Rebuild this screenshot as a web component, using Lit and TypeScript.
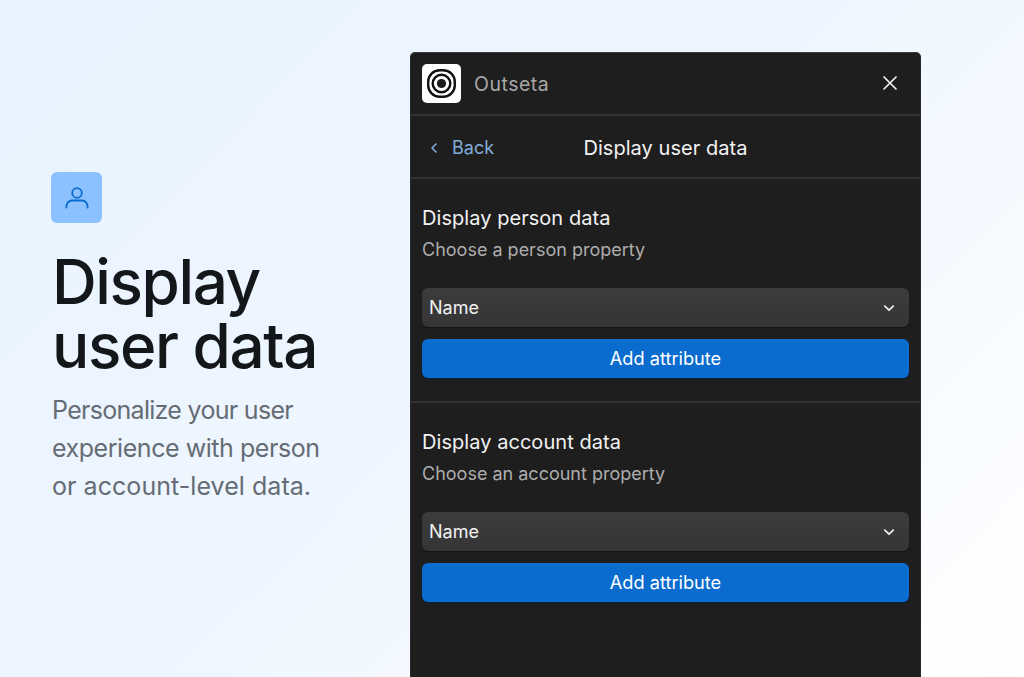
import { LitElement, html, css } from 'lit'
import { customElement } from 'lit/decorators.js'

const chevronDown = html`<svg class="chev" width="12" height="12" viewBox="0 0 12 12" fill="none"><path d="M1.800 4.200L6 8.200l4.200-4" stroke="#ececec" stroke-width="1.800" stroke-linecap="round" stroke-linejoin="round"/></svg>`

@customElement('app-root')
export class AppRoot extends LitElement {
  static styles = css`
    :host {
      display: block;
      width: 1024px;
      height: 677px;
      overflow: hidden;
      font-family: Inter, 'Liberation Sans', sans-serif;
      background: linear-gradient(135deg, #e8f3ff 0%, #eff6ff 50%, #ffffff 100%);
    }
    .page {
      display: flex;
      height: 677px;
      box-sizing: border-box;
      padding-left: 52px;
    }
    .intro {
      width: 358px;
      flex: none;
      display: flex;
      flex-direction: column;
      justify-content: center;
      box-sizing: border-box;
    }
    .badge {
      width: 51px;
      height: 51px;
      margin-left: -1px;
      border-radius: 6px;
      background: #8cc1ff;
      display: flex;
      align-items: center;
      justify-content: center;
    }
    h1 {
      margin: 27px 0 0;
      font-size: 62px;
      line-height: 64px;
      font-weight: 500;
      letter-spacing: -1.4px;
      color: #14171a;
    }
    .lead {
      margin: 13px 0 0;
      font-size: 25px;
      line-height: 38px;
      color: #656c75;
    }
    .lead span {
      display: block;
    }
    .l1 {
      letter-spacing: -0.7px;
    }
    .l2 {
      letter-spacing: -0.45px;
    }
    .l3 {
      letter-spacing: 0.05px;
    }
    .panel {
      margin-top: 52px;
      width: 511px;
      height: 640px;
      flex: none;
      box-sizing: border-box;
      background: #1e1e1e;
      border-radius: 5px 5px 0 0;
      border: 1px solid #2a2a2a;
      border-top-color: #3a3a3a;
      color: #f2f2f2;
    }
    .top {
      height: 61px;
      display: flex;
      align-items: center;
      padding: 0 11px;
      gap: 13px;
      border-bottom: 2px solid #333;
    }
    .logo {
      width: 39px;
      height: 39px;
      border-radius: 5px;
      background: #fff;
      display: flex;
      align-items: center;
      justify-content: center;
    }
    .brand {
      flex: 1;
      font-size: 19.500px;
      color: #a8a8a8;
      letter-spacing: 0.5px;
    }
    .close {
      display: flex;
      margin: 0 11px 1px 0;
    }
    .nav {
      position: relative;
      height: 59px;
      padding-top: 2px;
      display: flex;
      align-items: center;
      justify-content: center;
      border-bottom: 2px solid #333;
      font-size: 20px;
      font-weight: 400;
      letter-spacing: 0.05px;
    }
    .back {
      position: absolute;
      left: 19px;
      top: 1px;
      height: 61px;
      display: flex;
      align-items: center;
      gap: 14px;
      color: #82aedb;
      font-size: 18px;
      font-weight: 400;
      letter-spacing: 0;
    }
    .section {
      padding: 28px 11px 23px;
    }
    .section + .section {
      border-top: 2px solid #333;
    }
    h2 {
      margin: 0;
      font-size: 20px;
      line-height: 22px;
      font-weight: 400;
      letter-spacing: 0.05px;
      color: #f2f2f2;
    }
    .hint {
      margin: 10px 0 0;
      font-size: 18px;
      line-height: 22px;
      color: #adadad;
    }
    .select {
      margin-top: 27px;
      height: 39px;
      box-sizing: border-box;
      border-radius: 6px;
      background: linear-gradient(#3c3c3c, #353535);
      box-shadow: 0 1px 1px #111;
      display: flex;
      align-items: center;
      justify-content: space-between;
      padding: 0 14px 0 7px;
      font-size: 18px;
    }
    .add {
      display: block;
      width: 100%;
      height: 39px;
      margin-top: 12px;
      padding: 0 0 2px;
      border: none;
      border-radius: 6px;
      background: #0a6ccf;
      box-shadow: 0 1px 1px #04203f;
      color: #fff;
      font: 400 18.200px Inter, 'Liberation Sans', sans-serif;
    }
  `

  section(title: string, hint: string) {
    return html`
      <div class="section">
        <h2>${title}</h2>
        <p class="hint">${hint}</p>
        <div class="select"><span>Name</span>${chevronDown}</div>
        <button class="add">Add attribute</button>
      </div>
    `
  }

  render() {
    return html`
      <div class="page">
        <div class="intro">
          <div class="badge">
            <svg width="26" height="26" viewBox="0 0 26 26" fill="none" stroke="#0a6ccf" stroke-width="1.800" stroke-linecap="round">
              <circle cx="13" cy="8" r="4.800" />
              <path d="M2.400 22.500v-1c0-3 2.400-6 5.400-6h10.400c3 0 5.400 3 5.400 6v1" />
            </svg>
          </div>
          <h1>Display<br />user data</h1>
          <p class="lead">
            <span class="l1">Personalize your user</span>
            <span class="l2">experience with person</span>
            <span class="l3">or account-level data.</span>
          </p>
        </div>
        <div class="panel">
          <div class="top">
            <div class="logo">
              <svg width="31" height="31" viewBox="0 0 31 31" fill="none" stroke="#111">
                <rect x="2.200" y="2.200" width="26.600" height="26.600" rx="11.500" stroke-width="2.400" />
                <circle cx="15.500" cy="15.500" r="8.800" stroke-width="2.400" />
                <circle cx="15.500" cy="15.500" r="4.600" fill="#1a1a1a" stroke="none" />
              </svg>
            </div>
            <span class="brand">Outseta</span>
            <span class="close">
              <svg width="16" height="16" viewBox="0 0 16 16" fill="none" stroke="#f2f2f2" stroke-width="1.700" stroke-linecap="round"><path d="M2 2l12 12M14 2L2 14" /></svg>
            </span>
          </div>
          <div class="nav">
            <span class="back">
              <svg width="8" height="12" viewBox="0 0 8 12" fill="none" stroke="#82aedb" stroke-width="1.600" stroke-linecap="round" stroke-linejoin="round"><path d="M6 2L2 6l4 4" /></svg>
              Back
            </span>
            Display user data
          </div>
          ${this.section('Display person data', 'Choose a person property')}
          ${this.section('Display account data', 'Choose an account property')}
        </div>
      </div>
    `
  }
}
